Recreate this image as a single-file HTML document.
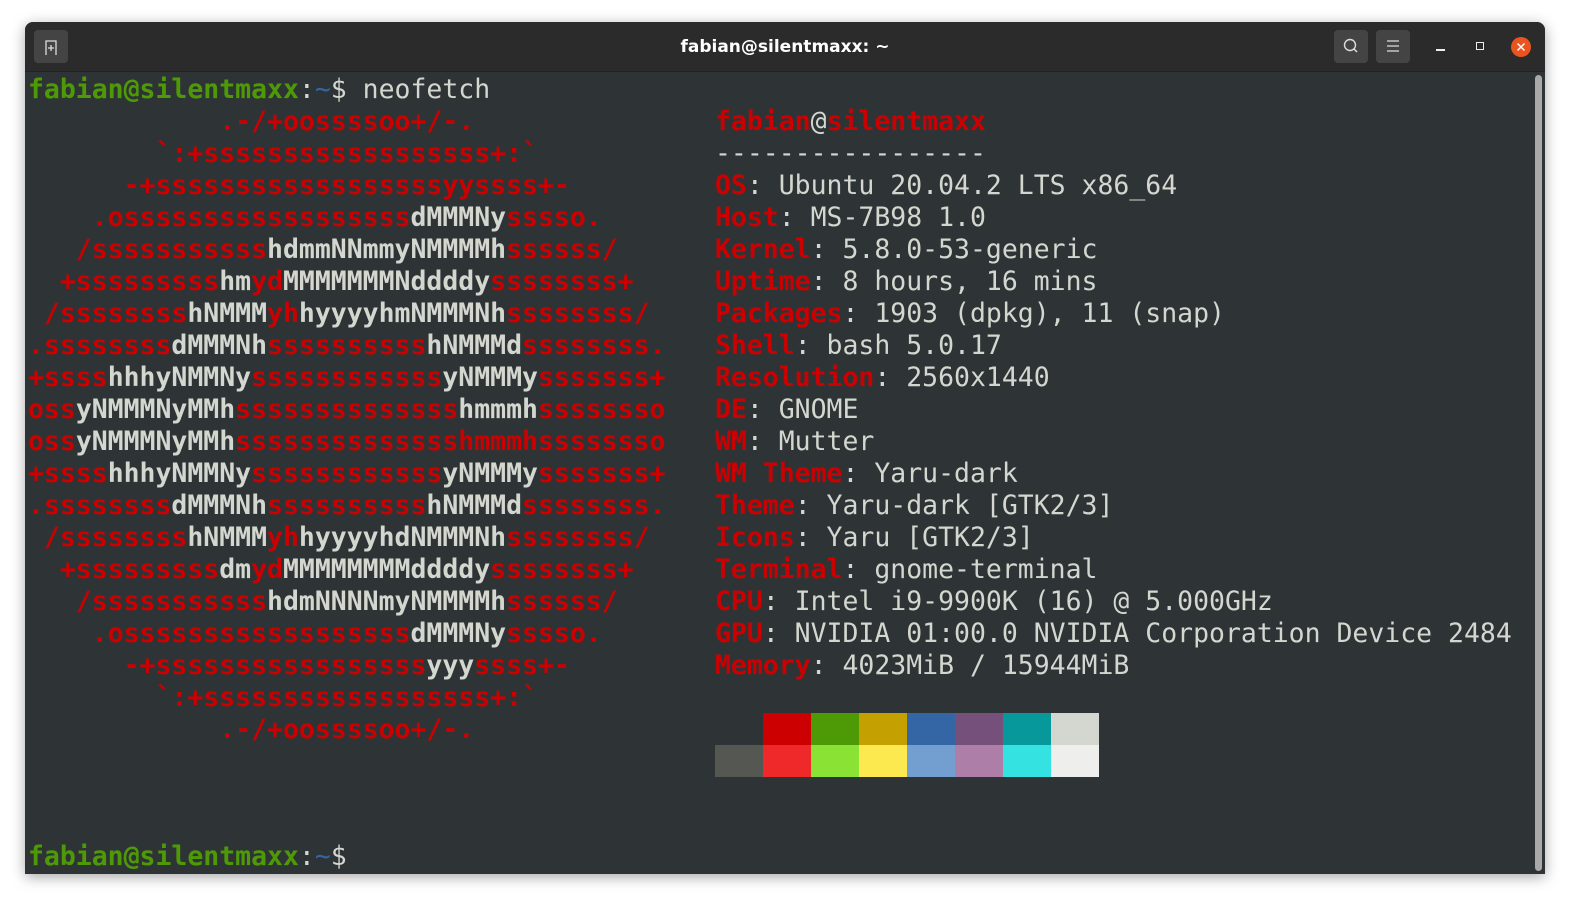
<!DOCTYPE html>
<html><head><meta charset="utf-8"><style>
body{margin:0;width:1570px;height:903px;background:#fff;overflow:hidden;position:relative;font-family:"DejaVu Sans Mono","Liberation Mono",monospace}
.win{position:absolute;left:25px;top:22px;width:1520px;height:852px;background:#2e3436;border-radius:8px 8px 0 0;box-shadow:0 3px 14px rgba(0,0,0,.35);overflow:hidden}
.tb{position:absolute;left:0;top:0;width:1520px;height:49px;background:#2b2b2b;border-bottom:1px solid #222}
.btn{position:absolute;top:8px;width:34px;height:33px;background:#444;border-radius:4px}
.title{position:absolute;left:0;width:1520px;top:15px;text-align:center;color:#fff;font:bold 17px "DejaVu Sans","Liberation Sans",sans-serif}
pre{position:absolute;margin:0;font-size:26.47px;line-height:32px;color:#d3d7cf;white-space:pre}
.r{color:#cc0000;font-weight:bold}.w{color:#d3d7cf;font-weight:bold}.g{color:#4e9a06;font-weight:bold}.b{color:#3465a4}
.c{position:absolute;width:48px;height:32px}
</style></head><body>
<div class="win">
<div class="tb">
<div class="btn" style="left:9px"><svg width="34" height="33"><path d="M12 25V11h10v14M14 18h6M17 15v6" stroke="#ddd" stroke-width="1.3" fill="none"/></svg></div>
<div class="title">fabian@silentmaxx: ~</div>
<div class="btn" style="left:1309px"><svg width="34" height="33"><circle cx="16" cy="15" r="5.5" stroke="#ddd" stroke-width="1.4" fill="none"/><path d="M20 19l3 3" stroke="#ddd" stroke-width="1.5"/></svg></div>
<div class="btn" style="left:1351px"><svg width="34" height="33"><path d="M11 11h12M11 16h12M11 21h12" stroke="#ddd" stroke-width="1.3"/></svg></div>
<div style="position:absolute;left:1411px;top:27px;width:9px;height:2px;background:#eee"></div>
<div style="position:absolute;left:1451px;top:20px;width:6px;height:6px;border:1.5px solid #eee"></div>
<div style="position:absolute;left:1486px;top:15px;width:20px;height:20px;border-radius:50%;background:#e95420"><svg width="20" height="20"><path d="M6.5 6.5l7 7M13.5 6.5l-7 7" stroke="#fff" stroke-width="1.5"/></svg></div>
</div>
<div style="position:absolute;left:1510px;top:53px;width:7px;height:796px;background:#a9a9a9;border-radius:4px"></div>
</div>
<pre style="left:28px;top:74px"><span class="g">fabian@silentmaxx</span>:<span class="b">~</span>$ neofetch</pre>
<pre style="left:28px;top:106px"><span class="r">            .-/+oossssoo+/-.
        `:+ssssssssssssssssss+:`
      -+ssssssssssssssssssyyssss+-
    .ossssssssssssssssss<span class="w">dMMMNy</span>sssso.
   /sssssssssss<span class="w">hdmmNNmmyNMMMMh</span>ssssss/
  +sssssssss<span class="w">hm</span>yd<span class="w">MMMMMMMNddddy</span>ssssssss+
 /ssssssss<span class="w">hNMMM</span>yh<span class="w">hyyyyhmNMMMNh</span>ssssssss/
.ssssssss<span class="w">dMMMNh</span>ssssssssss<span class="w">hNMMMd</span>ssssssss.
+ssss<span class="w">hhhyNMMNy</span>ssssssssssss<span class="w">yNMMMy</span>sssssss+
oss<span class="w">yNMMMNyMMh</span>ssssssssssssss<span class="w">hmmmh</span>ssssssso
oss<span class="w">yNMMMNyMMh</span>sssssssssssssshmmmhssssssso
+ssss<span class="w">hhhyNMMNy</span>ssssssssssss<span class="w">yNMMMy</span>sssssss+
.ssssssss<span class="w">dMMMNh</span>ssssssssss<span class="w">hNMMMd</span>ssssssss.
 /ssssssss<span class="w">hNMMM</span>yh<span class="w">hyyyyhdNMMMNh</span>ssssssss/
  +sssssssss<span class="w">dm</span>yd<span class="w">MMMMMMMMddddy</span>ssssssss+
   /sssssssssss<span class="w">hdmNNNNmyNMMMMh</span>ssssss/
    .ossssssssssssssssss<span class="w">dMMMNy</span>sssso.
      -+sssssssssssssssss<span class="w">yyy</span>ssss+-
        `:+ssssssssssssssssss+:`
            .-/+oossssoo+/-.</span></pre>
<pre style="left:715px;top:106px"><span class="r">fabian</span>@<span class="r">silentmaxx</span>
-----------------
<span class="r">OS</span>: Ubuntu 20.04.2 LTS x86_64
<span class="r">Host</span>: MS-7B98 1.0
<span class="r">Kernel</span>: 5.8.0-53-generic
<span class="r">Uptime</span>: 8 hours, 16 mins
<span class="r">Packages</span>: 1903 (dpkg), 11 (snap)
<span class="r">Shell</span>: bash 5.0.17
<span class="r">Resolution</span>: 2560x1440
<span class="r">DE</span>: GNOME
<span class="r">WM</span>: Mutter
<span class="r">WM Theme</span>: Yaru-dark
<span class="r">Theme</span>: Yaru-dark [GTK2/3]
<span class="r">Icons</span>: Yaru [GTK2/3]
<span class="r">Terminal</span>: gnome-terminal
<span class="r">CPU</span>: Intel i9-9900K (16) @ 5.000GHz
<span class="r">GPU</span>: NVIDIA 01:00.0 NVIDIA Corporation Device 2484
<span class="r">Memory</span>: 4023MiB / 15944MiB</pre>
<div class="c" style="left:715px;top:713px;background:#2e3436"></div>
<div class="c" style="left:763px;top:713px;background:#cc0000"></div>
<div class="c" style="left:811px;top:713px;background:#4e9a06"></div>
<div class="c" style="left:859px;top:713px;background:#c4a000"></div>
<div class="c" style="left:907px;top:713px;background:#3465a4"></div>
<div class="c" style="left:955px;top:713px;background:#75507b"></div>
<div class="c" style="left:1003px;top:713px;background:#06989a"></div>
<div class="c" style="left:1051px;top:713px;background:#d3d7cf"></div>
<div class="c" style="left:715px;top:745px;background:#555753"></div>
<div class="c" style="left:763px;top:745px;background:#ef2929"></div>
<div class="c" style="left:811px;top:745px;background:#8ae234"></div>
<div class="c" style="left:859px;top:745px;background:#fce94f"></div>
<div class="c" style="left:907px;top:745px;background:#729fcf"></div>
<div class="c" style="left:955px;top:745px;background:#ad7fa8"></div>
<div class="c" style="left:1003px;top:745px;background:#34e2e2"></div>
<div class="c" style="left:1051px;top:745px;background:#eeeeec"></div>
<pre style="left:28px;top:841px"><span class="g">fabian@silentmaxx</span>:<span class="b">~</span>$</pre>
</body></html>
